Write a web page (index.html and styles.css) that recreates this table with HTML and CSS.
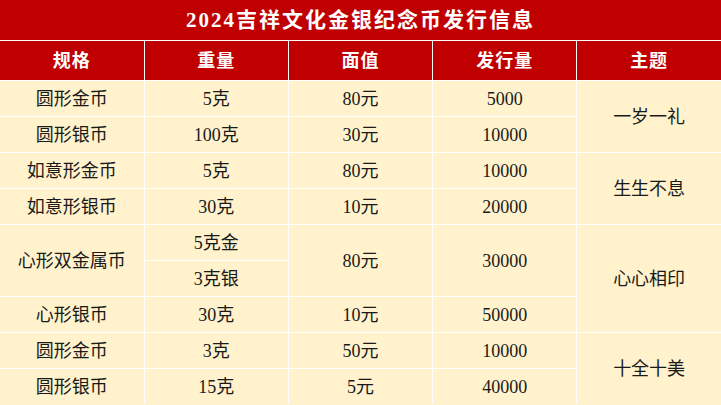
FILE: index.html
```html
<!DOCTYPE html>
<html lang="zh-CN">
<head>
<meta charset="utf-8">
<title>2024吉祥文化金银纪念币发行信息</title>
<link rel="stylesheet" href="styles.css">
</head>
<body>
<table class="coin-table">
  <colgroup>
    <col class="c"><col class="c"><col class="c"><col class="c"><col class="c">
  </colgroup>
  <thead>
    <tr class="title-row"><th colspan="5">2024吉祥文化金银纪念币发行信息</th></tr>
    <tr class="head-row"><th>规格</th><th>重量</th><th>面值</th><th>发行量</th><th>主题</th></tr>
  </thead>
  <tbody>
    <tr><td>圆形金币</td><td>5克</td><td>80元</td><td>5000</td><td rowspan="2">一岁一礼</td></tr>
    <tr><td>圆形银币</td><td>100克</td><td>30元</td><td>10000</td></tr>
    <tr><td>如意形金币</td><td>5克</td><td>80元</td><td>10000</td><td rowspan="2">生生不息</td></tr>
    <tr><td>如意形银币</td><td>30克</td><td>10元</td><td>20000</td></tr>
    <tr><td rowspan="2">心形双金属币</td><td>5克金</td><td rowspan="2">80元</td><td rowspan="2">30000</td><td rowspan="3">心心相印</td></tr>
    <tr><td>3克银</td></tr>
    <tr><td>心形银币</td><td>30克</td><td>10元</td><td>50000</td></tr>
    <tr><td>圆形金币</td><td>3克</td><td>50元</td><td>10000</td><td rowspan="2">十全十美</td></tr>
    <tr><td>圆形银币</td><td>15克</td><td>5元</td><td>40000</td></tr>
  </tbody>
</table>
</body>
</html>
```
FILE: styles.css
```css
html, body {
  margin: 0;
  padding: 0;
  background: #FFF2CC;
}
.coin-table {
  width: 721px;
  border-collapse: collapse;
  table-layout: fixed;
  border: hidden;
  font-family: "Liberation Serif", "Noto Sans CJK SC", serif;
}
.coin-table .c {
  width: 144px;
}
.coin-table th,
.coin-table td {
  border: 1px solid #ffffff;
  padding: 0;
  text-align: center;
  vertical-align: middle;
  line-height: 1;
}
.title-row th {
  height: 40px;
  background: #C00000;
  color: #ffffff;
  font-size: 21px;
  font-weight: bold;
  letter-spacing: 2px;
}
.head-row th {
  height: 39px;
  background: #C00000;
  color: #ffffff;
  font-size: 18px;
  font-weight: bold;
  letter-spacing: 1px;
}
.coin-table td {
  height: 35px;
  background: #FFF2CC;
  color: #1a1a1a;
  font-size: 18px;
}
```
